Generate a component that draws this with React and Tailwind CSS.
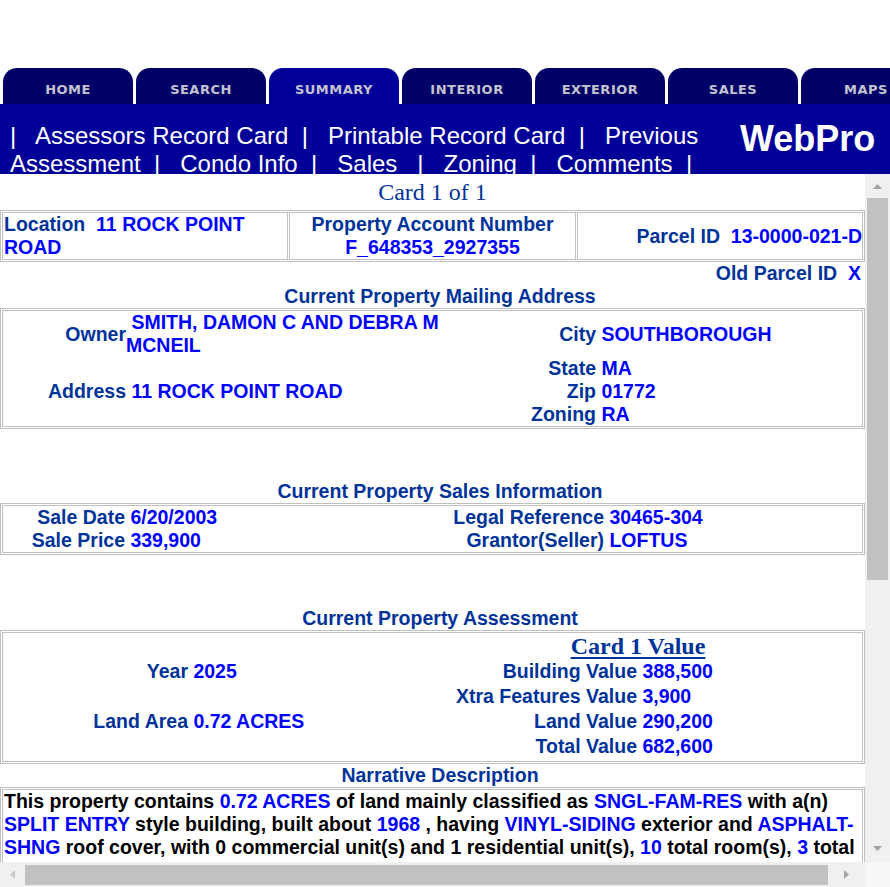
import React from "react";

const tabs = ["HOME", "SEARCH", "SUMMARY", "INTERIOR", "EXTERIOR", "SALES", "MAPS"];

function Tab({ label, active }) {
    return (
        <div
            className={`w-[130px] h-[36px] shrink-0 rounded-t-[14px] flex justify-center pt-[15px] ${
                active ? "bg-[#000099]" : "bg-[#000066]"
            }`}
        >
            <span className="text-[13px] leading-[13px] font-bold tracking-[0.5px] text-[#c4c4d0] font-['DejaVu_Sans',sans-serif]">
                {label}
            </span>
        </div>
    );
}

// label / value cells used in the record tables
function L({ children, className = "" }) {
    return <div className={`text-right text-[#003399] self-center ${className}`}>{children}</div>;
}

function V({ children, className = "" }) {
    return (
        <div className={`text-[#0000ff] self-center ${className}`}>
            {"\u00a0"}
            {children}
        </div>
    );
}

function Box({ children, className = "" }) {
    return (
        <div className="w-[865px] border border-[#c0c0c0] p-[1px]">
            <div className={`border border-[#c0c0c0] ${className}`}>{children}</div>
        </div>
    );
}

function Heading({ children }) {
    return <div className="w-[880px] text-center text-[#003399]">{children}</div>;
}

function B({ children }) {
    return <span className="text-[#0000ff]">{children}</span>;
}

function VScroll() {
    return (
        <div className="w-[25px] shrink-0 bg-[#f0f0f0] flex flex-col">
            <div className="h-[24px] flex justify-center pt-[10px]">
                <svg width="9" height="5" viewBox="0 0 9 5">
                    <polygon points="0,5 4.5,0 9,5" fill="#a3a3a3" />
                </svg>
            </div>
            <div className="h-[382px] mx-[2px] bg-[#c1c1c1]" />
            <div className="flex-1" />
            <div className="h-[24px] flex justify-center pt-[8px]">
                <svg width="9" height="5" viewBox="0 0 9 5">
                    <polygon points="0,0 9,0 4.5,5" fill="#a3a3a3" />
                </svg>
            </div>
        </div>
    );
}

function HScroll() {
    return (
        <div className="flex h-[25px]">
            <div className="w-[865px] bg-[#f0f0f0] flex items-center">
                <div className="w-[25px] flex justify-center">
                    <svg width="5" height="9" viewBox="0 0 5 9">
                        <polygon points="5,0 5,9 0,4.5" fill="#c8c8c8" />
                    </svg>
                </div>
                <div className="w-[803px] h-[20px] bg-[#c1c1c1]" />
                <div className="flex-1 flex justify-center">
                    <svg width="5" height="9" viewBox="0 0 5 9">
                        <polygon points="0,0 5,4.5 0,9" fill="#a3a3a3" />
                    </svg>
                </div>
            </div>
            <div className="w-[25px] bg-[#f7f7f7]" />
        </div>
    );
}

export default function App() {
    return (
        <div className="w-[890px] h-[887px] overflow-hidden bg-white font-['Liberation_Sans',Arial,sans-serif]">
            {/* tab strip */}
            <div className="pt-[68px]">
                <div className="flex gap-[3px] pl-[3px] h-[36px]">
                    {tabs.map((t) => (
                        <Tab key={t} label={t} active={t === "SUMMARY"} />
                    ))}
                </div>
            </div>

            {/* link bar */}
            <div className="h-[70px] bg-[#000099] flex overflow-hidden text-white">
                <div className="w-[740px] shrink-0 pl-[10px] pt-[18px] text-[24px] leading-[28px] whitespace-pre">
                    <div>{"|   Assessors Record Card  |   Printable Record Card  |   Previous"}</div>
                    <div>{"Assessment  |   Condo Info  |   Sales   |   Zoning  |   Comments  |"}</div>
                </div>
                <div className="pt-[15px] text-[36px] leading-[40px] font-bold">WebPro</div>
            </div>

            {/* framed record */}
            <div className="flex h-[688px]">
                <div className="w-[865px] h-[688px] shrink-0 overflow-hidden bg-white font-bold text-[19.5px] leading-[23px]">
                    <div className="w-[880px]">
                        <div className="w-[865px] pt-[4px] pb-[4px] text-center font-['Liberation_Serif',serif] font-normal text-[24px] leading-[28px] text-[#003399]">
                            Card 1 of 1
                        </div>

                        <div className="w-[865px] border border-[#c0c0c0] p-[1px] grid grid-cols-3 gap-[1px]">
                            <div className="border border-[#c0c0c0] h-[48px] px-[1px]">
                                <span className="text-[#003399]">Location{"\u00a0\u00a0"}</span>
                                <B>11 ROCK POINT ROAD</B>
                            </div>
                            <div className="border border-[#c0c0c0] h-[48px] text-center">
                                <div className="text-[#003399]">Property Account Number</div>
                                <div className="text-[#0000ff]">F_648353_2927355</div>
                            </div>
                            <div className="border border-[#c0c0c0] h-[48px] flex items-center justify-end">
                                <span className="text-[#003399]">Parcel ID{"\u00a0\u00a0"}</span>
                                <B>13-0000-021-D</B>
                            </div>
                        </div>

                        <div className="w-[865px] text-right pr-[4px]">
                            <span className="text-[#003399]">Old Parcel ID{"\u00a0\u00a0"}</span>
                            <B>X</B>
                        </div>

                        <Heading>Current Property Mailing Address</Heading>
                        <Box className="grid grid-cols-[123px_324px_146px_1fr] grid-rows-[46px_23px_23px_23px]">
                            <L>Owner</L>
                            <V>SMITH, DAMON C AND DEBRA M MCNEIL</V>
                            <L>City</L>
                            <V>SOUTHBOROUGH</V>

                            <div />
                            <div />
                            <L>State</L>
                            <V>MA</V>

                            <L>Address</L>
                            <V>11 ROCK POINT ROAD</V>
                            <L>Zip</L>
                            <V>01772</V>

                            <div />
                            <div />
                            <L>Zoning</L>
                            <V>RA</V>
                        </Box>

                        <div className="h-[51px]" />
                        <Heading>Current Property Sales Information</Heading>
                        <Box className="grid grid-cols-[122px_315px_164px_1fr] grid-rows-[23px_23px]">
                            <L>Sale Date</L>
                            <V>6/20/2003</V>
                            <L>Legal Reference</L>
                            <V>30465-304</V>

                            <L>Sale Price</L>
                            <V>339,900</V>
                            <L>Grantor(Seller)</L>
                            <V>LOFTUS</V>
                        </Box>

                        <div className="h-[52px]" />
                        <Heading>Current Property Assessment</Heading>
                        <Box className="grid grid-cols-[185px_252px_197px_1fr] grid-rows-[26px_25px_25px_25px_25px] pb-[2px]">
                            <div />
                            <div />
                            <div className="col-span-2 text-center pr-[26px] font-['Liberation_Serif',serif] text-[24px] leading-[26px] text-[#003399] underline underline-offset-[3px]">
                                Card 1 Value
                            </div>

                            <L>Year</L>
                            <V>2025</V>
                            <L>Building Value</L>
                            <V>388,500</V>

                            <div />
                            <div />
                            <L>Xtra Features Value</L>
                            <V>3,900</V>

                            <L>Land Area</L>
                            <V>0.72 ACRES</V>
                            <L>Land Value</L>
                            <V>290,200</V>

                            <div />
                            <div />
                            <L>Total Value</L>
                            <V>682,600</V>
                        </Box>

                        <Heading>Narrative Description</Heading>
                        <Box className="px-[1px] text-black">
                            This property contains <B>0.72 ACRES</B> of land mainly classified as{" "}
                            <B>SNGL-FAM-RES</B> with a(n) <B>SPLIT ENTRY</B> style building, built about{" "}
                            <B>1968</B> , having <B>VINYL-SIDING</B> exterior and <B>ASPHALT-SHNG</B> roof
                            cover, with 0 commercial unit(s) and 1 residential unit(s), <B>10</B> total
                            room(s), <B>3</B> total bedroom(s), <B>1</B> total bath(s), <B>1</B> total half
                            bath(s), <B>0</B> total 3/4 bath(s).
                        </Box>
                    </div>
                </div>
                <VScroll />
            </div>
            <HScroll />
        </div>
    );
}
